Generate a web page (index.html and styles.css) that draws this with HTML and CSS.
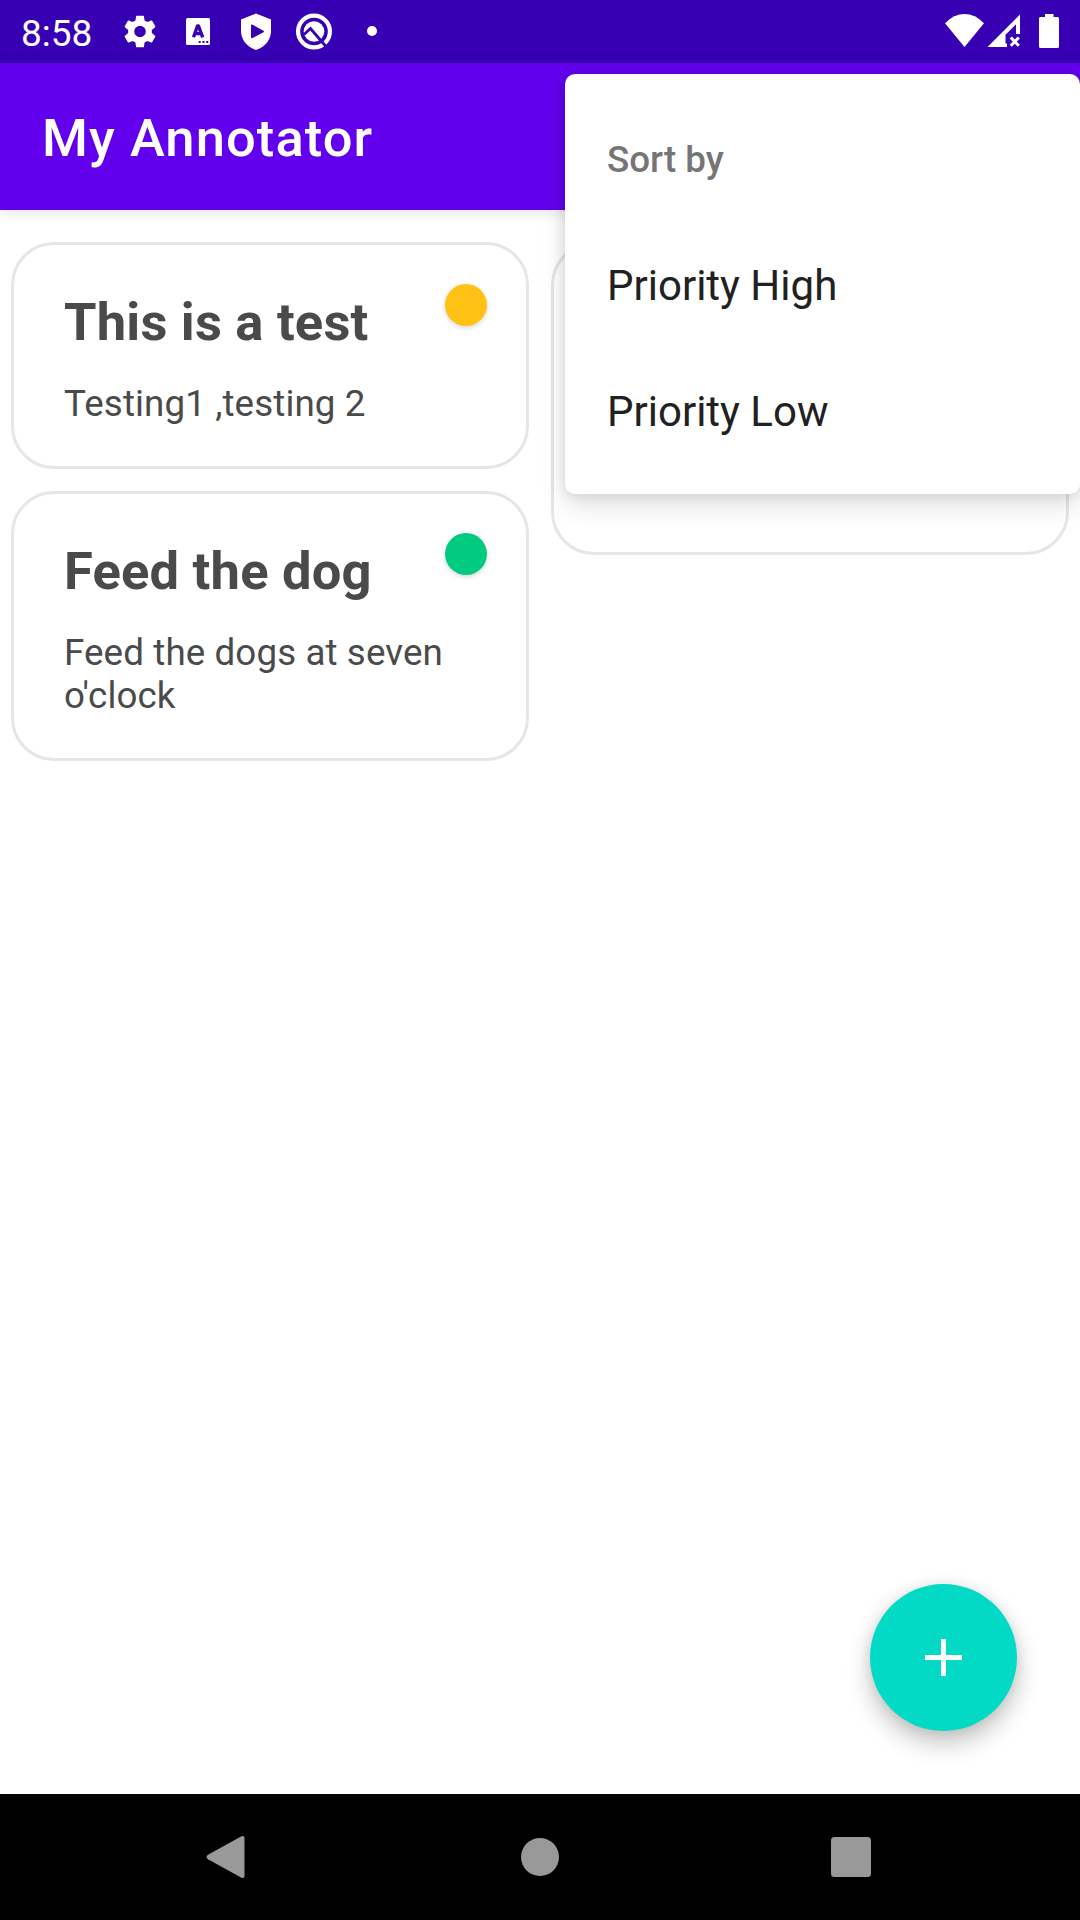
FILE: index.html
```html
<!DOCTYPE html>
<html lang="en">
<head>
<meta charset="utf-8">
<title>My Annotator</title>
<link rel="stylesheet" href="styles.css">
</head>
<body>
<div class="screen">
  <header class="status-bar">
    <span class="clock">8:58</span>
    <div class="notifications">
      <svg class="notification" viewBox="111 0 58 63"><path transform="translate(120.2 11.7) scale(1.65)" fill-rule="evenodd" d="M19.14 12.94c.04-.3.06-.61.06-.94 0-.32-.02-.64-.07-.94l2.03-1.58c.18-.14.23-.41.12-.61l-1.92-3.32c-.12-.22-.37-.29-.59-.22l-2.39.96c-.5-.38-1.03-.7-1.62-.94L14.4 2.81c-.04-.24-.24-.41-.48-.41h-3.84c-.24 0-.43.17-.47.41L9.25 5.35c-.59.24-1.13.57-1.62.94l-2.39-.96c-.22-.08-.47 0-.59.22L2.74 8.87c-.12.21-.08.47.12.61l2.03 1.58c-.05.3-.09.63-.09.94s.02.64.07.94l-2.03 1.58c-.18.14-.23.41-.12.61l1.92 3.32c.12.22.37.29.59.22l2.39-.96c.5.38 1.03.7 1.62.94l.36 2.54c.05.24.24.41.48.41h3.84c.24 0 .44-.17.47-.41l.36-2.54c.59-.24 1.13-.56 1.62-.94l2.39.96c.22.08.47 0 .59-.22l1.92-3.32c.12-.22.07-.47-.12-.61zM12 15.5a3.5 3.5 0 1 1 0-7 3.5 3.5 0 0 1 0 7z"/></svg>
      <svg class="notification" viewBox="169 0 58 63"><rect x="186" y="18" width="24" height="27" rx="1.5"/><path class="cut-line" d="M193.500 37.300 197.500 26h1l4.200 11.300M195 33.600h6"/><path class="cut" d="M198.700 41h2v2h-2zM202.500 41h2v2h-2zM206.200 41h2v2h-2z"/></svg>
      <svg class="notification" viewBox="227 0 58 63"><path d="M256 13.500 271 19.500V31c0 8-5 15.500-15 19-10-3.500-15-11-15-19V19.500z"/><path class="cut" d="M251 25.500q0-1.500 1.500-.8L263.500 30.700q1 .8 0 1.600L252.500 38q-1.500.7-1.500-.8z"/></svg>
      <svg class="notification" viewBox="285 0 58 63"><circle class="ring" cx="314" cy="31.500" r="15.900"/><circle cx="314" cy="31.500" r="10.300"/><path class="q-cut" d="M304 34.500 310.500 28.500 326 46.500"/></svg>
      <svg class="notification" viewBox="343 0 58 63"><circle cx="372" cy="31" r="5"/></svg>
    </div>
    <svg class="system-icons" viewBox="940 0 130 63">
      <path d="M945 23.200Q954 14 964.500 14T984 23.200L964.500 47z"/>
      <path fill-rule="evenodd" d="M987.500 47 1020 14.500V34h-4V24.300L1005.500 34.800V43.500h1.500V47z"/>
      <path class="no-signal" d="M1010.800 37.500l8 8.300M1018.800 37.500l-8 8.300"/>
      <path d="M1045 14h8.500v3h4q1.500 0 1.500 1.500v28q0 1.500-1.500 1.500h-17q-1.500 0-1.500-1.500v-28q0-1.500 1.500-1.500h4.500z"/>
    </svg>
  </header>

  <div class="toolbar"><h1 class="app-title">My Annotator</h1></div>

  <main class="notes">
    <div class="column">
      <article class="note">
        <div class="note-text"><h2 class="note-title">This is a test</h2><p class="note-body">Testing1 ,testing 2</p></div>
        <span class="priority medium"></span>
      </article>
      <article class="note">
        <div class="note-text"><h2 class="note-title">Feed the dog</h2><p class="note-body">Feed the dogs at seven o'clock</p></div>
        <span class="priority low"></span>
      </article>
    </div>
    <div class="column">
      <article class="note covered"></article>
    </div>
  </main>

  <nav class="nav-bar">
    <svg class="nav-icon" viewBox="1.5 0 64 64"><path d="M14.500 29.800 47.500 11.500Q51 9.800 51 13V51Q51 54.200 47.500 52.500L14.500 34.200Q11.500 32 14.500 29.800z"/></svg>
    <svg class="nav-icon" viewBox="0 0 64 64"><circle cx="32" cy="32" r="19"/></svg>
    <svg class="nav-icon" viewBox="2 0 64 64"><rect x="12" y="12" width="40" height="40" rx="3.500"/></svg>
  </nav>

  <button class="fab" aria-label="Add note"><svg class="plus" viewBox="0 0 37 37"><path d="M16 0h5v16h16v5H21v16h-5V21H0v-5h16z"/></svg></button>

  <div class="menu">
    <div class="menu-item menu-header"><span>Sort by</span></div>
    <div class="menu-item"><span>Priority High</span></div>
    <div class="menu-item"><span>Priority Low</span></div>
  </div>
</div>
</body>
</html>
```
FILE: styles.css
```css
* { box-sizing: border-box; }
body { margin: 0; font-family: Roboto, sans-serif; }
h1, h2, p { margin: 0; }

.screen {
  position: relative;
  display: flex;
  flex-direction: column;
  width: 1080px;
  height: 1920px;
  overflow: hidden;
  background: #fff;
}

.status-bar {
  display: flex;
  flex: none;
  height: 63px;
  padding: 0 10px 0 21px;
  background: #3700b3;
  color: #fff;
}
.clock { width: 90px; font-size: 37px; line-height: 67px; }
.notifications { display: flex; }
.notification, .system-icons { display: block; height: 63px; fill: #fff; }
.notification { width: 58px; }
.system-icons { width: 130px; margin-left: auto; }
.notification .cut { fill: #3700b3; }
.cut-line { fill: none; stroke: #3700b3; stroke-width: 3.4; stroke-linejoin: round; }
.ring { fill: none; stroke: #fff; stroke-width: 4.2; }
.q-cut { fill: none; stroke: #3700b3; stroke-width: 2.8; }
.no-signal { stroke: #fff; stroke-width: 3; }

.toolbar {
  z-index: 1;
  display: flex;
  flex: none;
  align-items: center;
  height: 147px;
  padding: 3px 0 0 42px;
  background: #6200ee;
  box-shadow: 0 3px 12px rgba(0, 0, 0, .1);
}
.app-title { font-size: 52.5px; font-weight: 500; line-height: 62px; letter-spacing: 1.08px; color: #fff; }

.notes { display: flex; flex: 1; gap: 22px; padding: 32px 11px 0; }
.column { display: flex; flex: 1; flex-direction: column; gap: 22px; }
.note {
  display: flex;
  justify-content: space-between;
  padding: 39px 39px 39px 50px;
  border: 3px solid #e6e6e6;
  border-radius: 43px;
  background: #fff;
  color: #4a4a4a;
}
.covered { height: 313px; }
.note-text { display: flex; flex-direction: column; gap: 29px; padding-top: 7px; }
.note-title { font-size: 52.5px; font-weight: 700; line-height: 62px; letter-spacing: .2px; }
.note-body { font-size: 36.75px; line-height: 43px; letter-spacing: .1px; padding-bottom: 2px; }
.priority { flex: none; width: 42px; height: 42px; border-radius: 50%; box-shadow: 0 2px 5px rgba(0, 0, 0, .15); }
.medium { background: #ffc114; }
.low { background: #00cb80; }

.nav-bar {
  display: grid;
  flex: none;
  grid-template-columns: repeat(3, 313px);
  align-items: center;
  justify-content: center;
  justify-items: center;
  height: 126px;
  background: #000;
}
.nav-icon { width: 64px; height: 64px; fill: #999; }

.fab {
  position: absolute;
  left: 870px;
  top: 1584px;
  display: flex;
  align-items: center;
  justify-content: center;
  width: 147px;
  height: 147px;
  padding: 0;
  border: 0;
  border-radius: 50%;
  background: #03dac5;
  box-shadow: 0 12px 24px rgba(0, 0, 0, .24), 0 0 12px rgba(0, 0, 0, .08);
}
.plus { width: 37px; height: 37px; fill: #fff; }

.menu {
  position: absolute;
  z-index: 2;
  left: 565px;
  top: 74px;
  width: 515px;
  padding: 21px 0;
  border-radius: 10px;
  background: #fff;
  box-shadow: 0 12px 26px rgba(0, 0, 0, .12), 0 0 14px rgba(0, 0, 0, .12);
}
.menu-item { display: flex; align-items: center; height: 126px; padding: 2px 42px 0; font-size: 42px; color: #212121; }
.menu-header { font-size: 36.75px; font-weight: 500; color: #757575; }
```
